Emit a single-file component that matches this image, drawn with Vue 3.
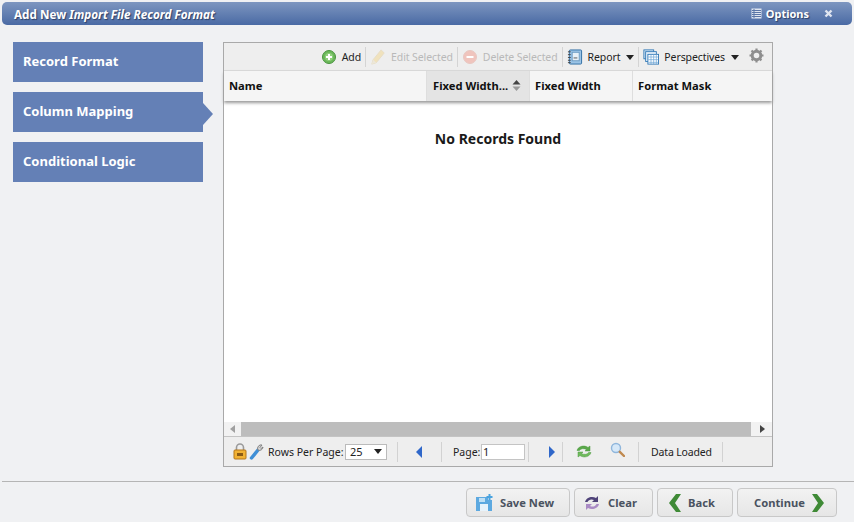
<template>
  <div class="page">
    <header class="title-bar">
      <span class="title">Add New <em>Import File Record Format</em></span>
      <span class="options">
        <svg width="11" height="11" viewBox="0 0 11 11"><path d="M.5.500h10v10H.500z" fill="#dfe5f0"/><path d="M1 2.500h9M1 4.500h9M1 6.500h9M1 8.500h9M3 1v9" stroke="#5b76a8" stroke-width="1"/></svg>
        Options
      </span>
      <svg class="close" width="9" height="9" viewBox="0 0 9 9"><path d="M1.500 1.500l6 6M7.500 1.500l-6 6" stroke="#dfe5f0" stroke-width="2.400"/></svg>
    </header>

    <div class="content">
      <nav class="steps">
        <div v-for="s in steps" :key="s" class="step" :class="{ active: s === 'Column Mapping' }">{{ s }}</div>
      </nav>

      <section class="grid-panel">
        <div class="toolbar">
          <span class="tool">
            <svg width="16" height="16" viewBox="0 0 16 16"><circle cx="8" cy="8" r="6.500" fill="#6cb85a" stroke="#4a9440"/><circle cx="8" cy="8" r="4" fill="#8fd07c"/><path d="M8 5v6M5 8h6" stroke="#fff" stroke-width="2"/></svg>
            Add
          </span>
          <i class="sep"></i>
          <span class="tool disabled">
            <svg width="16" height="18" viewBox="0 0 18 20"><path d="M2 18l1.500-5L12.500 2l3.500 3.500L7 16.500z" fill="#f0e2bd" stroke="#e6dcc4"/><path d="M2 18l1.500-5 3.500 3.500z" fill="#ece7da"/></svg>
            Edit Selected
          </span>
          <i class="sep"></i>
          <span class="tool disabled">
            <svg width="16" height="16" viewBox="0 0 16 16"><circle cx="8" cy="8" r="6.500" fill="#f0c4bd" stroke="#e8c8c2"/><path d="M4.500 8h7" stroke="#fff" stroke-width="2"/></svg>
            Delete Selected
          </span>
          <i class="sep"></i>
          <span class="tool">
            <svg width="16" height="18" viewBox="0 0 17 18"><rect x="2.500" y="1.500" width="13" height="15" rx="1" fill="#9cc4e6" stroke="#2e6da4"/><rect x="5.500" y="4" width="7.500" height="9" fill="#e8f1f8" stroke="#6d9cc4"/><path d="M7 10h4" stroke="#555"/><path d="M1 3.500h3M1 6.500h3M1 9.500h3M1 12.500h3M1 15h3" stroke="#444"/></svg>
            Report
            <b class="caret"></b>
          </span>
          <i class="sep"></i>
          <span class="tool">
            <svg width="16" height="16" viewBox="0 0 18 18"><rect x="1" y="1" width="11" height="10" fill="#dcebf7" stroke="#2f77b5"/><rect x="3" y="3" width="12" height="11" fill="#e7f1fa" stroke="#2f77b5"/><rect x="5.500" y="6" width="12" height="11" fill="#fff" stroke="#2f77b5"/><path d="M6 9h11M6 12h11M6 15h11M9 6v11M12 6v11M15 6v11" stroke="#6ea6d6" stroke-width=".8"/></svg>
            Perspectives
            <b class="caret"></b>
          </span>
          <svg class="gear" width="15" height="15" viewBox="0 0 15 15"><circle cx="7.500" cy="7.500" r="4.300" fill="none" stroke="#8e8e8e" stroke-width="3"/><path d="M7.500 0.500v14M0.500 7.500h14M2.500 2.500l10 10M12.500 2.500l-10 10" stroke="#8e8e8e" stroke-width="2.200" stroke-dasharray="2.600 8.800"/></svg>
        </div>

        <div class="columns">
          <div class="col col-name">Name</div>
          <div class="col col-sorted">
            Fixed Width...
            <svg width="9" height="13" viewBox="0 0 9 13"><path d="M4.500 1L8.500 5.500H.5z" fill="#444"/><path d="M4.500 12L8.500 7.500H.5z" fill="#999"/></svg>
          </div>
          <div class="col col-width">Fixed Width</div>
          <div class="col col-mask">Format Mask</div>
        </div>

        <div class="grid-body">No Records Found</div>

        <div class="hscroll">
          <span class="arrow left"></span>
          <div class="thumb"></div>
          <span class="arrow right"></span>
        </div>

        <div class="pager">
          <svg width="14" height="17" viewBox="0 0 14 17"><path d="M3.500 7V4.500a3.500 3.500 0 017 0V7" fill="none" stroke="#9a9a9a" stroke-width="1.600"/><rect x="1" y="7" width="12" height="9" rx="1" fill="#f2b233" stroke="#b5761a"/><rect x="4" y="10" width="6" height="3" fill="#8a5a14"/></svg>
          <svg class="wrench" width="15" height="17" viewBox="0 0 15 17"><path d="M2.500 15L9 7" stroke="#3f8fd6" stroke-width="3.500" stroke-linecap="round"/><path d="M9 7a3.500 3.500 0 014-5l-2 2.500 1 1L14 4a3.500 3.500 0 01-5 3z" fill="#d8d8d8" stroke="#808080"/></svg>
          <span class="rows-label">Rows Per Page:</span>
          <div class="rows-select">25<b class="caret"></b></div>
          <i class="psep"></i>
          <svg class="nav" width="8" height="12" viewBox="0 0 8 12"><path d="M7 0v12L1 6z" fill="#2f67c9"/></svg>
          <i class="psep"></i>
          <span class="page-label">Page:</span>
          <div class="page-input">1</div>
          <i class="psep before-next"></i>
          <svg class="nav next-page" width="8" height="12" viewBox="0 0 8 12"><path d="M1 0v12l6-6z" fill="#2f67c9"/></svg>
          <i class="psep after-next"></i>
          <svg class="refresh" width="18" height="15" viewBox="0 0 18 15"><path d="M2 6.500C3 2.500 9 .5 13 3.500L15 2v5h-5l1.500-1.500C9 4 5.500 4.500 4.500 6.500z" fill="#5aa84a" stroke="#4d9a40" stroke-width=".5"/><path d="M16 8.500c-1 4-7 6-11 3L3 13V8h5L6.500 9.500C9 11 12.500 10.500 13.500 8.500z" fill="#6fba5c" stroke="#4d9a40" stroke-width=".5"/></svg>
          <svg class="search" width="15" height="15" viewBox="0 0 15 15"><circle cx="6" cy="6" r="4.500" fill="#d6e8f8" stroke="#8fb6dc" stroke-width="1.400"/><path d="M9.800 9.800L14 14" stroke="#c08a50" stroke-width="2.400" stroke-linecap="round"/></svg>
          <i class="psep after-search"></i>
          <span class="status">Data Loaded</span>
          <i class="psep"></i>
        </div>
      </section>
    </div>

    <footer class="footer">
      <button class="btn save">
        <svg width="18" height="18" viewBox="0 0 18 18"><path d="M1 3h12v3h4v11H1z" fill="#5da9e0"/><rect x="5" y="10" width="8" height="7" fill="#e8f3fb"/><path d="M14.500 0v6M11.500 3h6" stroke="#4aa3df" stroke-width="2"/><path d="M4 4v4h6V4" fill="#bfe0f5"/></svg>
        Save New
      </button>
      <button class="btn clear">
        <svg width="18" height="16" viewBox="0 0 18 16"><path d="M2 7C3 2.500 9 .5 13 3l2-2v6h-6l2-2C8.500 3.800 5.500 4.500 4.500 7z" fill="#4f4379"/><path d="M16 9c-1 4.500-7 6.500-11 4l-2 2V9h6l-2 2c2.500 1.200 5.500.5 6.500-2z" fill="#a98ac4"/></svg>
        Clear
      </button>
      <button class="btn back">
        <svg width="13" height="18" viewBox="0 0 13 18"><path d="M8 0h5L7 9l6 9H8L1 9z" fill="#3f8a36"/></svg>
        Back
      </button>
      <button class="btn next">
        Continue
        <svg width="13" height="18" viewBox="0 0 13 18"><path d="M5 0H0l6 9-6 9h5l7-9z" fill="#3f8a36"/></svg>
      </button>
    </footer>
  </div>
</template>

<script setup>
const steps = ['Record Format', 'Column Mapping', 'Conditional Logic']
</script>

<style>
html, body {
  margin: 0;
  background: #f0f1f3;
}
</style>

<style scoped>
.page {
  width: 854px;
  height: 522px;
  box-sizing: border-box;
  padding-top: 2px;
  background: #f0f1f3;
  font-family: "Noto Sans", sans-serif;
  font-size: 10.500px;
  color: #222;
  display: flex;
  flex-direction: column;
  overflow: hidden;
}

.title-bar {
  height: 23px;
  margin: 0 2px;
  padding: 0 19px 0 12px;
  display: flex;
  align-items: center;
  border-radius: 5px;
  background: linear-gradient(#7d96c0, #4a6aa4);
  color: #fff;
  font-weight: 700;
  text-shadow: 1px 1px 1px #2c3f66;
}

.title {
  flex: 1;
  font-size: 11.700px;
}

.options {
  display: flex;
  align-items: center;
  gap: 4px;
  margin-right: 15px;
  font-size: 11px;
}

.close {
  flex: none;
}

.content {
  display: flex;
  margin-top: 17px;
  padding-left: 13px;
  gap: 20px;
}

.steps {
  width: 190px;
  display: flex;
  flex-direction: column;
  gap: 10px;
}

.step {
  position: relative;
  height: 40px;
  line-height: 39px;
  padding-left: 10px;
  background: #6480b6;
  color: #fff;
  font-size: 13px;
  font-weight: 700;
}

.step.active::after {
  content: "";
  position: absolute;
  left: 100%;
  top: 11px;
  border-left: 10px solid #6480b6;
  border-top: 11px solid transparent;
  border-bottom: 11px solid transparent;
}

.grid-panel {
  width: 550px;
  height: 425px;
  box-sizing: border-box;
  border: 1px solid #a9a9a9;
  background: #fff;
  display: flex;
  flex-direction: column;
}

.toolbar {
  height: 28px;
  flex: none;
  box-sizing: border-box;
  display: flex;
  align-items: center;
  justify-content: flex-end;
  gap: 4px;
  padding: 1px 8px 0 0;
  background: #eeeeee;
  border-bottom: 1px solid #dcdcdc;
  letter-spacing: -0.1px;
}

.tool {
  display: flex;
  align-items: center;
  gap: 5px;
}

.tool.disabled {
  color: #b9b9b9;
}

.sep {
  width: 1px;
  height: 20px;
  background: #d4d4d4;
}

.caret {
  display: inline-block;
  margin-left: 1px;
  border-top: 5px solid #222;
  border-left: 4px solid transparent;
  border-right: 4px solid transparent;
}

.gear {
  margin-left: 6px;
  margin-bottom: 3px;
}

.columns {
  height: 30px;
  flex: none;
  display: flex;
  background: #f5f5f5;
  box-shadow: 0 2px 3px #999;
  font-size: 11.200px;
  font-weight: 700;
  color: #111;
  white-space: nowrap;
}

.col {
  box-sizing: border-box;
  display: flex;
  align-items: center;
  padding: 0 0 2px 5px;
  border-right: 1px solid #dedede;
}

.col-name { width: 203px; }
.col-sorted {
  width: 103px;
  padding-left: 6px;
  gap: 4px;
  background: #e4e4e4;
}
.col-width { width: 103px; }
.col-mask { flex: 1; border-right: 0; }

.grid-body {
  flex: 1;
  padding-top: 28px;
  text-align: center;
  font-size: 14px;
  font-weight: 700;
  line-height: 20px;
  color: #1a1a1a;
}

.hscroll {
  height: 14px;
  flex: none;
  display: flex;
  align-items: center;
  background: #f2f2f2;
}

.thumb {
  flex: 1;
  height: 14px;
  background: #bdbdbd;
}

.arrow {
  width: 17px;
  display: flex;
  justify-content: center;
}

.arrow.right {
  width: 21px;
  padding-left: 2px;
  box-sizing: border-box;
}

.arrow::before {
  content: "";
  border-top: 4px solid transparent;
  border-bottom: 4px solid transparent;
}

.arrow.left::before { border-right: 5px solid #a0a0a0; }
.arrow.right::before { border-left: 5px solid #444; }

.pager {
  height: 30px;
  flex: none;
  box-sizing: border-box;
  display: flex;
  align-items: center;
  padding-left: 9px;
  background: #eeeeee;
  border-top: 1px solid #c4c4c4;
}

.wrench { margin-left: 2px; }

.rows-label { margin-left: 4px; width: 76px; white-space: nowrap; }

.rows-select {
  width: 42px;
  height: 16px;
  margin-left: 1px;
  box-sizing: border-box;
  display: flex;
  align-items: center;
  justify-content: space-between;
  padding: 0 4px;
  background: #fff;
  border: 1px solid #bbb;
  font-size: 11px;
}

.psep {
  width: 1px;
  height: 20px;
  background: #d2d2d2;
  margin: 0 9px 0 10px;
}

.psep.before-next { margin: 0 11px 0 3px; }
.psep.after-next { margin-left: 6px; }
.psep.after-search { margin-left: 13px; }

.nav { margin: 0 8px; }
.nav.next-page { margin-right: 0; }

.page-label { margin-left: 2px; width: 27px; }

.page-input {
  width: 44px;
  height: 16px;
  margin-left: 1px;
  box-sizing: border-box;
  padding-left: 1px;
  line-height: 14px;
  background: #fff;
  border: 1px solid #c4c4c4;
  font-size: 11px;
}

.search { margin-left: 17px; margin-bottom: 4px; }
.refresh { margin-left: 3px; margin-bottom: 1px; }
.status { margin-left: 3px; width: 61px; white-space: nowrap; letter-spacing: -0.15px; }

.footer {
  margin-top: 14px;
  margin-left: 2px;
  padding-top: 6px;
  border-top: 1px solid #b5b5b5;
  display: flex;
  justify-content: flex-end;
  gap: 4px;
  padding-right: 17px;
}

.btn {
  height: 29px;
  box-sizing: border-box;
  display: flex;
  align-items: center;
  gap: 7px;
  border: 1px solid #c8c8c8;
  border-radius: 4px;
  background: linear-gradient(#f2f2f2, #e6e6e6);
  color: #4a5260;
  font-family: inherit;
  font-size: 11.200px;
  font-weight: 700;
  padding: 0 0 0 8px;
}

.save { width: 104px; }
.clear { width: 79px; }
.back { width: 76px; padding-left: 10px; }
.next { width: 100px; padding-left: 16px; }
</style>
